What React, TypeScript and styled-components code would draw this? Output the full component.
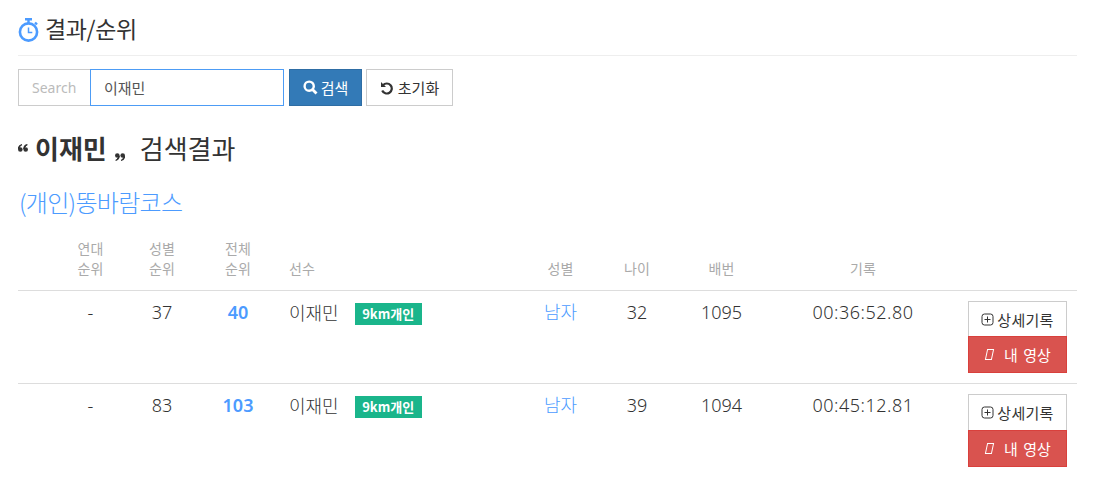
import React from "react";
import styled, { createGlobalStyle } from "styled-components";

const Global = createGlobalStyle`
  html, body { margin: 0; padding: 0; background: #fff; }
  body { font-family: "Noto Sans CJK KR", "Noto Sans", sans-serif; color: #333; }
  * { box-sizing: border-box; }
`;

const Page = styled.div`
  width: 1102px;
  height: 490px;
  padding: 0 25px 0 18px;
  overflow: hidden;
`;
const TitleBar = styled.div`
  height: 56px;
  border-bottom: 1px solid #eee;
  display: flex;
  align-items: center;
  gap: 6px;
`;
const TitleText = styled.h1`
  margin: 0;
  font-size: 23px;
  font-weight: 400;
  line-height: 30px;
  letter-spacing: -0.4px;
  color: #333;
`;
const SearchRow = styled.form`
  display: flex;
  margin-top: 13px;
  height: 37px;
`;
const SearchLabel = styled.span`
  width: 72px;
  border: 1px solid #ccc;
  border-right: 0;
  color: #bbb;
  font-size: 14px;
  font-family: "Noto Sans", sans-serif;
  display: flex;
  align-items: center;
  padding-left: 13px;
`;
const SearchField = styled.div`
  width: 194px;
  border: 1px solid #4d9cf5;
  font-size: 15px;
  padding-left: 13px;
  display: flex;
  align-items: center;
  color: #555;
`;
const Btn = styled.button<{ $primary?: boolean }>`
  height: 37px;
  display: flex;
  align-items: center;
  justify-content: center;
  gap: 3px;
  font: inherit;
  font-size: 15px;
  padding: 0;
  margin-left: ${(p) => (p.$primary ? "5px" : "4px")};
  width: ${(p) => (p.$primary ? "73px" : "87px")};
  background: ${(p) => (p.$primary ? "#337ab7" : "#fff")};
  color: ${(p) => (p.$primary ? "#fff" : "#333")};
  border: 1px solid ${(p) => (p.$primary ? "#2e6da4" : "#ccc")};
`;
const ResultHeading = styled.h2`
  margin: 23px 0 0;
  height: 38px;
  font-size: 26px;
  line-height: 38px;
  font-weight: 400;
  color: #333;
  display: flex;
  align-items: center;
`;
const Keyword = styled.strong`
  font-weight: 700;
  margin: 0 8px 0 7px;
`;
const Quote = styled.svg`
  width: 10px;
  height: 8px;
  flex: none;
`;
const QuoteClose = styled(Quote)`
  transform: translateY(9px);
  margin-right: 15px;
`;
const Course = styled.h3`
  margin: 16px 0 0;
  height: 38px;
  font-size: 24px;
  line-height: 38px;
  font-weight: 300;
  color: #4c9bff;
  letter-spacing: -0.7px;
  padding-left: 1px;
`;
const Table = styled.table`
  margin-top: 17px;
  width: 1059px;
  table-layout: fixed;
  border-collapse: collapse;
`;
const Th = styled.th<{ $left?: boolean }>`
  font-size: 14px;
  font-weight: 400;
  line-height: 20px;
  color: #aaa;
  text-align: ${(p) => (p.$left ? "left" : "center")};
  vertical-align: bottom;
  padding: 0 0 12px ${(p) => (p.$left ? "11px" : "0")};
  border-bottom: 1px solid #ddd;
`;
const Tr = styled.tr`
  height: 93px;
  border-bottom: 1px solid #ddd;
  &:last-child { border-bottom: 0; }
`;
const Td = styled.td<{ $left?: boolean }>`
  font-family: "Noto Sans", "Noto Sans CJK KR", sans-serif;
  font-size: 18px;
  font-weight: 300;
  line-height: 24px;
  vertical-align: top;
  padding: 9px 0 0 ${(p) => (p.$left ? "11px" : "0")};
  text-align: ${(p) => (p.$left ? "left" : "center")};
  color: #333;
`;
const Overall = styled.span`
  font-weight: 600;
  font-size: 18px;
  color: #4c9bff;
`;
const Male = styled.span`
  color: #4c9bff;
`;
const Time = styled.span`
  letter-spacing: 0.5px;
`;
const Player = styled.div`
  display: flex;
  align-items: center;
`;
const Badge = styled.span`
  margin-left: 16px;
  margin-top: 3px;
  width: 67px;
  height: 22px;
  background: #1ab58b;
  color: #fff;
  font-family: "Noto Sans CJK KR", sans-serif;
  font-size: 13px;
  font-weight: 700;
  line-height: 22px;
  text-align: center;
`;
const Actions = styled.div`
  width: 99px;
  margin: 1px 0 0 7px;
  display: flex;
  flex-direction: column;
`;
const DetailBtn = styled.button<{ $height: number }>`
  height: ${(p) => p.$height}px;
  border: 1px solid #ccc;
  border-bottom: 0;
  background: #fff;
  color: #333;
  font-family: "Noto Sans CJK KR", sans-serif;
  font-size: 15px;
  font-weight: 400;
  letter-spacing: 0.3px;
  padding: 0;
  display: flex;
  align-items: center;
  justify-content: center;
  gap: 3px;
`;
const VideoBtn = styled.button`
  height: 37px;
  border: 1px solid #d9403c;
  background: #d9534f;
  color: #fff;
  font-family: "Noto Sans CJK KR", sans-serif;
  font-size: 15px;
  font-weight: 400;
  word-spacing: 2px;
  padding: 0 0 0 2px;
  display: flex;
  align-items: center;
  justify-content: center;
  gap: 11px;
`;
const MissingGlyph = styled.i`
  width: 7px;
  height: 11px;
  border: 1px solid #fff;
  transform: skewX(-12deg);
  display: block;
`;

const Stopwatch = () => (
  <svg width="21" height="26" viewBox="0 0 21 26" fill="none" style={{ flex: "none", marginTop: 5 }}>
    <circle cx="10.5" cy="15" r="8.6" stroke="#4c9bff" strokeWidth="2.6" />
    <path d="M7 2.2h7M10.5 2.2v4M17 5.5l2 2" stroke="#4c9bff" strokeWidth="2.4" />
    <path d="M10.5 10.5v5h3.8" stroke="#4c9bff" strokeWidth="1.5" />
  </svg>
);
const SearchIcon = () => (
  <svg width="15" height="15" viewBox="0 0 15 15" fill="none">
    <circle cx="6.2" cy="6.2" r="4.6" stroke="#fff" strokeWidth="2.4" />
    <path d="M9.5 9.5l4 4" stroke="#fff" strokeWidth="2.8" />
  </svg>
);
const UndoIcon = () => (
  <svg width="15" height="14" viewBox="0 0 15 14" fill="none">
    <path d="M3 4.2A5 5 0 1 1 2.2 9.5" stroke="#333" strokeWidth="2.2" />
    <path d="M1 1v5h5z" fill="#333" />
  </svg>
);
const PlusBox = () => (
  <svg width="13" height="13" viewBox="0 0 13 13" fill="none">
    <rect x="1" y="1" width="11" height="11" rx="2.5" stroke="#333" />
    <path d="M6.5 3.5v6M3.5 6.5h6" stroke="#333" />
  </svg>
);
const QuoteMarks = () => (
  <>
    <circle cx="2.3" cy="5.5" r="2.3" fill="#333" />
    <circle cx="7.7" cy="5.5" r="2.3" fill="#333" />
  </>
);

const rows = [
  { age: "-", gender: "37", overall: "40", name: "이재민", sex: "남자", years: "32", bib: "1095", time: "00:36:52.80", detailHeight: 35 },
  { age: "-", gender: "83", overall: "103", name: "이재민", sex: "남자", years: "39", bib: "1094", time: "00:45:12.81", detailHeight: 36 },
];
const widths = [37, 71, 72, 80, 247, 71, 82, 87, 196, 116];

export default function App() {
  return (
    <Page>
      <Global />
      <TitleBar>
        <Stopwatch />
        <TitleText>결과/순위</TitleText>
      </TitleBar>
      <SearchRow>
        <SearchLabel>Search</SearchLabel>
        <SearchField>이재민</SearchField>
        <Btn type="button" $primary><SearchIcon />검색</Btn>
        <Btn type="button"><UndoIcon />초기화</Btn>
      </SearchRow>
      <ResultHeading>
        <Quote viewBox="0 0 10 8"><QuoteMarks /><path d="M0.3 5C0.5 2.5 2 1 4 0.6M5.7 5C5.9 2.5 7.4 1 9.4 0.6" stroke="#333" strokeWidth="1.2" /></Quote>
        <Keyword>이재민</Keyword>
        <QuoteClose viewBox="0 0 10 8"><g transform="rotate(180 5 4)"><QuoteMarks /><path d="M0.3 5C0.5 2.5 2 1 4 0.6M5.7 5C5.9 2.5 7.4 1 9.4 0.6" stroke="#333" strokeWidth="1.2" /></g></QuoteClose>
        검색결과
      </ResultHeading>
      <Course>(개인)똥바람코스</Course>
      <Table>
        <colgroup>
          {widths.map((w, i) => <col key={i} width={w} />)}
        </colgroup>
        <thead>
          <tr>
            <Th />
            <Th>연대<br />순위</Th>
            <Th>성별<br />순위</Th>
            <Th>전체<br />순위</Th>
            <Th $left>선수</Th>
            <Th>성별</Th>
            <Th>나이</Th>
            <Th>배번</Th>
            <Th>기록</Th>
            <Th />
          </tr>
        </thead>
        <tbody>
          {rows.map((r) => (
            <Tr key={r.bib}>
              <Td />
              <Td>{r.age}</Td>
              <Td>{r.gender}</Td>
              <Td><Overall>{r.overall}</Overall></Td>
              <Td $left>
                <Player>{r.name}<Badge>9km개인</Badge></Player>
              </Td>
              <Td><Male>{r.sex}</Male></Td>
              <Td>{r.years}</Td>
              <Td>{r.bib}</Td>
              <Td><Time>{r.time}</Time></Td>
              <Td>
                <Actions>
                  <DetailBtn type="button" $height={r.detailHeight}><PlusBox />상세기록</DetailBtn>
                  <VideoBtn type="button"><MissingGlyph />내 영상</VideoBtn>
                </Actions>
              </Td>
            </Tr>
          ))}
        </tbody>
      </Table>
    </Page>
  );
}
